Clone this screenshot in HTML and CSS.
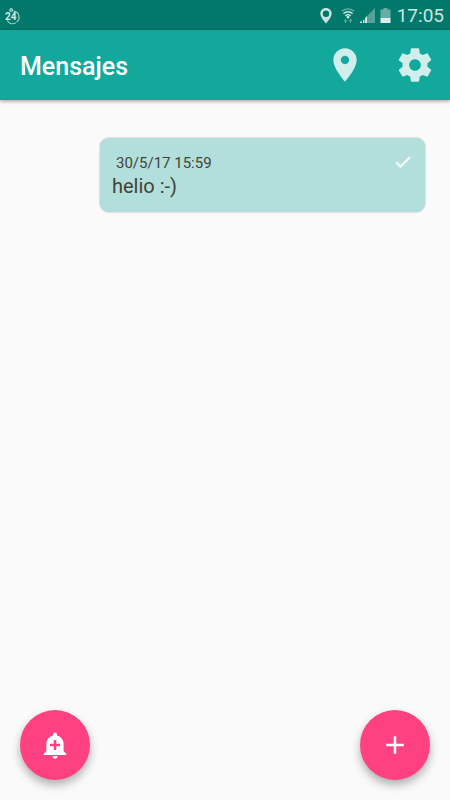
FILE: index.html
```html
<!DOCTYPE html>
<html lang="es">
<head>
    <meta charset="UTF-8">
    <meta name="viewport" content="width=device-width, initial-scale=1.0">
    <title>Mensajes</title>
    <link rel="stylesheet" href="styles.css">
</head>
<body>
    <div class="app">
        <div class="status-bar">
            <svg class="status-24" width="16" height="20" viewBox="0 0 16 20" aria-hidden="true">
                <path d="M7.500 5.200a6 6 0 0 1 3 10.900M1.200 14.500a6 6 0 0 0 8.500 2.300" fill="none" stroke="#9accc4" stroke-width="1.200"/>
                <circle cx="5.200" cy="4" r="1.500" fill="#66ada4" stroke="#b3d9d3" stroke-width="1"/>
                <text x="-1" y="14" class="text-24">24</text>
            </svg>
            <div class="status-icons">
                <svg class="status-pin" width="12" height="16" viewBox="0 0 12 16" aria-hidden="true">
                    <path fill="#cce4e1" fill-rule="evenodd" d="M6 0C2.700 0 .3 2.500.3 5.600.3 9.600 6 15.500 6 15.500s5.700-5.900 5.700-9.900C11.700 2.500 9.300 0 6 0zm0 2.500a3.200 3.200 0 1 1 0 6.400 3.200 3.200 0 0 1 0-6.400z"/>
                </svg>
                <svg class="status-wifi" width="14" height="16" viewBox="0 0 14 16" aria-hidden="true">
                    <g fill="none" stroke-width="1.5">
                        <path d="M.8 3.200Q7-1.200 13.200 3.200" stroke="#5ea99f"/>
                        <path d="M2.300 5.500Q7 1.800 11.700 5.500M4.200 7.800Q7 5.200 9.800 7.800" stroke="#cce4e1"/>
                    </g>
                    <circle cx="7" cy="9" r="1.500" fill="#cce4e1"/>
                    <path d="M4.500 11v3M9.500 12v3" stroke="#5ea99f" stroke-width="1.200"/>
                    <path d="M2.500 12.500h4l-2 2.500zM7.500 13h4l-2-2.500z" fill="#5ea99f"/>
                </svg>
                <svg class="status-signal" width="16" height="16" viewBox="0 0 16 16" aria-hidden="true">
                    <path fill="#52a297" d="M15 0v15H7V8z"/>
                    <path fill="#cce4e1" d="M0 13.500h2V15H0zM3 12h1.500v3H3zM5 10l2-2v7H5z"/>
                </svg>
                <svg class="status-battery" width="12" height="16" viewBox="0 0 12 16" aria-hidden="true">
                    <path fill="#66ada4" d="M3.500 0h4v1.500h3V11H.5V1.500h3z"/>
                    <path fill="#dceeec" d="M.5 10h10v5H.5z"/>
                </svg>
                <span class="clock">17:05</span>
            </div>
        </div>

        <header class="toolbar">
            <h1>Mensajes</h1>
            <button class="toolbar-btn" type="button" aria-label="Ubicación">
                <svg width="40" height="40" viewBox="0 0 24 24">
                    <path d="M12 2C8.130 2 5 5.130 5 9c0 5.250 7 13 7 13s7-7.750 7-13c0-3.870-3.130-7-7-7zm0 9.500c-1.380 0-2.500-1.120-2.500-2.500s1.120-2.500 2.500-2.500 2.500 1.120 2.500 2.500-1.120 2.500-2.500 2.500z"/>
                </svg>
            </button>
            <button class="toolbar-btn" type="button" aria-label="Ajustes">
                <svg width="40" height="40" viewBox="0 0 24 24">
                    <path d="M19.430 12.980c.04-.32.07-.64.07-.98s-.03-.66-.07-.98l2.110-1.650c.19-.15.24-.42.12-.64l-2-3.460c-.12-.22-.39-.3-.61-.22l-2.490 1c-.52-.4-1.080-.73-1.690-.98l-.38-2.650C14.460 2.180 14.250 2 14 2h-4c-.25 0-.46.18-.49.42l-.38 2.650c-.61.25-1.170.59-1.690.98l-2.490-1c-.23-.09-.49 0-.61.22l-2 3.460c-.13.22-.07.49.12.64l2.110 1.650c-.04.32-.07.65-.07.98s.03.66.07.98l-2.110 1.650c-.19.15-.24.42-.12.64l2 3.460c.12.22.39.3.61.22l2.490-1c.52.4 1.080.73 1.690.98l.38 2.650c.03.24.24.42.49.42h4c.25 0 .46-.18.49-.42l.38-2.650c.61-.25 1.170-.59 1.690-.98l2.490 1c.23.09.49 0 .61-.22l2-3.460c.12-.22.07-.49-.12-.64l-2.110-1.650zM12 15.500c-1.930 0-3.500-1.570-3.500-3.500s1.570-3.500 3.500-3.500 3.500 1.570 3.500 3.500-1.570 3.500-3.500 3.500z"/>
                </svg>
            </button>
        </header>

        <main class="messages">
            <article class="message">
                <div class="message-top">
                    <time datetime="2017-05-30T15:59">30/5/17 15:59</time>
                    <svg class="sent-icon" width="20" height="20" viewBox="0 0 24 24" aria-label="Enviado">
                        <path d="M9 16.170L4.830 12l-1.420 1.410L9 19 21 7l-1.410-1.410z"/>
                    </svg>
                </div>
                <p>helio :-)</p>
            </article>
        </main>

        <footer class="actions">
            <button class="fab" type="button" aria-label="Nueva alerta">
                <svg width="30" height="30" viewBox="0 0 24 24">
                    <path d="M10.010 21.010c0 1.100.89 1.990 1.990 1.990s1.990-.89 1.990-1.990h-3.980zm8.870-4.190V11c0-3.250-2.250-5.970-5.290-6.690v-.72C13.590 2.710 12.880 2 12 2s-1.590.71-1.590 1.590v.72C7.370 5.030 5.120 7.750 5.120 11v5.820L3 18.940V20h18v-1.060l-2.120-2.120zM16 13.010h-3v3h-2v-3H8V11h3V8h2v3h3v2.010z"/>
                </svg>
            </button>
            <button class="fab" type="button" aria-label="Nuevo mensaje">
                <svg width="30" height="30" viewBox="0 0 24 24">
                    <path d="M19 13h-6v6h-2v-6H5v-2h6V5h2v6h6v2z"/>
                </svg>
            </button>
        </footer>
    </div>
</body>
</html>
```
FILE: styles.css
```css
* {
    box-sizing: border-box;
}

body {
    margin: 0;
    font-family: Roboto, sans-serif;
    background-color: #fafafa;
    color: #424239;
}

button {
    border: none;
    padding: 0;
    cursor: pointer;
}

svg {
    display: block;
}

.app {
    display: flex;
    flex-direction: column;
    min-height: 100vh;
}

/* Status bar */
.status-bar {
    display: flex;
    align-items: center;
    justify-content: space-between;
    height: 30px;
    padding: 2px 6px 0;
    background-color: #00796b;
}

.status-icons {
    display: flex;
    align-items: center;
}

.status-24 {
    overflow: visible;
}

.status-pin {
    margin-right: 9px;
}

.status-wifi {
    margin-right: 5px;
}

.status-signal {
    margin-right: 4px;
}

.status-battery {
    margin-right: 5px;
}

.text-24 {
    font-size: 10px;
    font-weight: bold;
    fill: #d5eae7;
}

.clock {
    font-size: 19px;
    line-height: 28px;
    color: #cce4e1;
}

/* Toolbar */
.toolbar {
    display: flex;
    align-items: center;
    gap: 30px;
    height: 70px;
    padding: 0 15px 0 20px;
    background-color: #12a99c;
    box-shadow: 0 1px 4px rgba(0, 0, 0, 0.4);
}

.toolbar h1 {
    flex: 1;
    margin: 0;
    padding-top: 2px;
    font-size: 25px;
    font-weight: 500;
    color: #fff;
}

.toolbar-btn {
    background: none;
    fill: #d0eeeb;
}

/* Messages */
.messages {
    flex: 1;
    padding: 38px 25px 0 100px;
}

.message {
    padding: 14px 12px 13px;
    border-radius: 9px;
    background-color: #b2dfdb;
    box-shadow: 0 0 2px rgba(0, 0, 0, 0.35);
}

.message-top {
    display: flex;
    align-items: center;
    justify-content: space-between;
    height: 22px;
    padding-left: 4px;
    font-size: 15px;
}

.sent-icon {
    fill: #f2faf9;
    stroke: #f2faf9;
    margin-bottom: 3px;
}

.message p {
    margin: 0;
    font-size: 20px;
    line-height: 25px;
}

/* Floating buttons */
.actions {
    display: flex;
    justify-content: space-between;
    padding: 0 20px 20px;
}

.fab {
    display: flex;
    align-items: center;
    justify-content: center;
    width: 70px;
    height: 70px;
    border-radius: 50%;
    background-color: #ff4081;
    fill: #fff;
    box-shadow: 0 5px 10px rgba(0, 0, 0, 0.3);
}
```
